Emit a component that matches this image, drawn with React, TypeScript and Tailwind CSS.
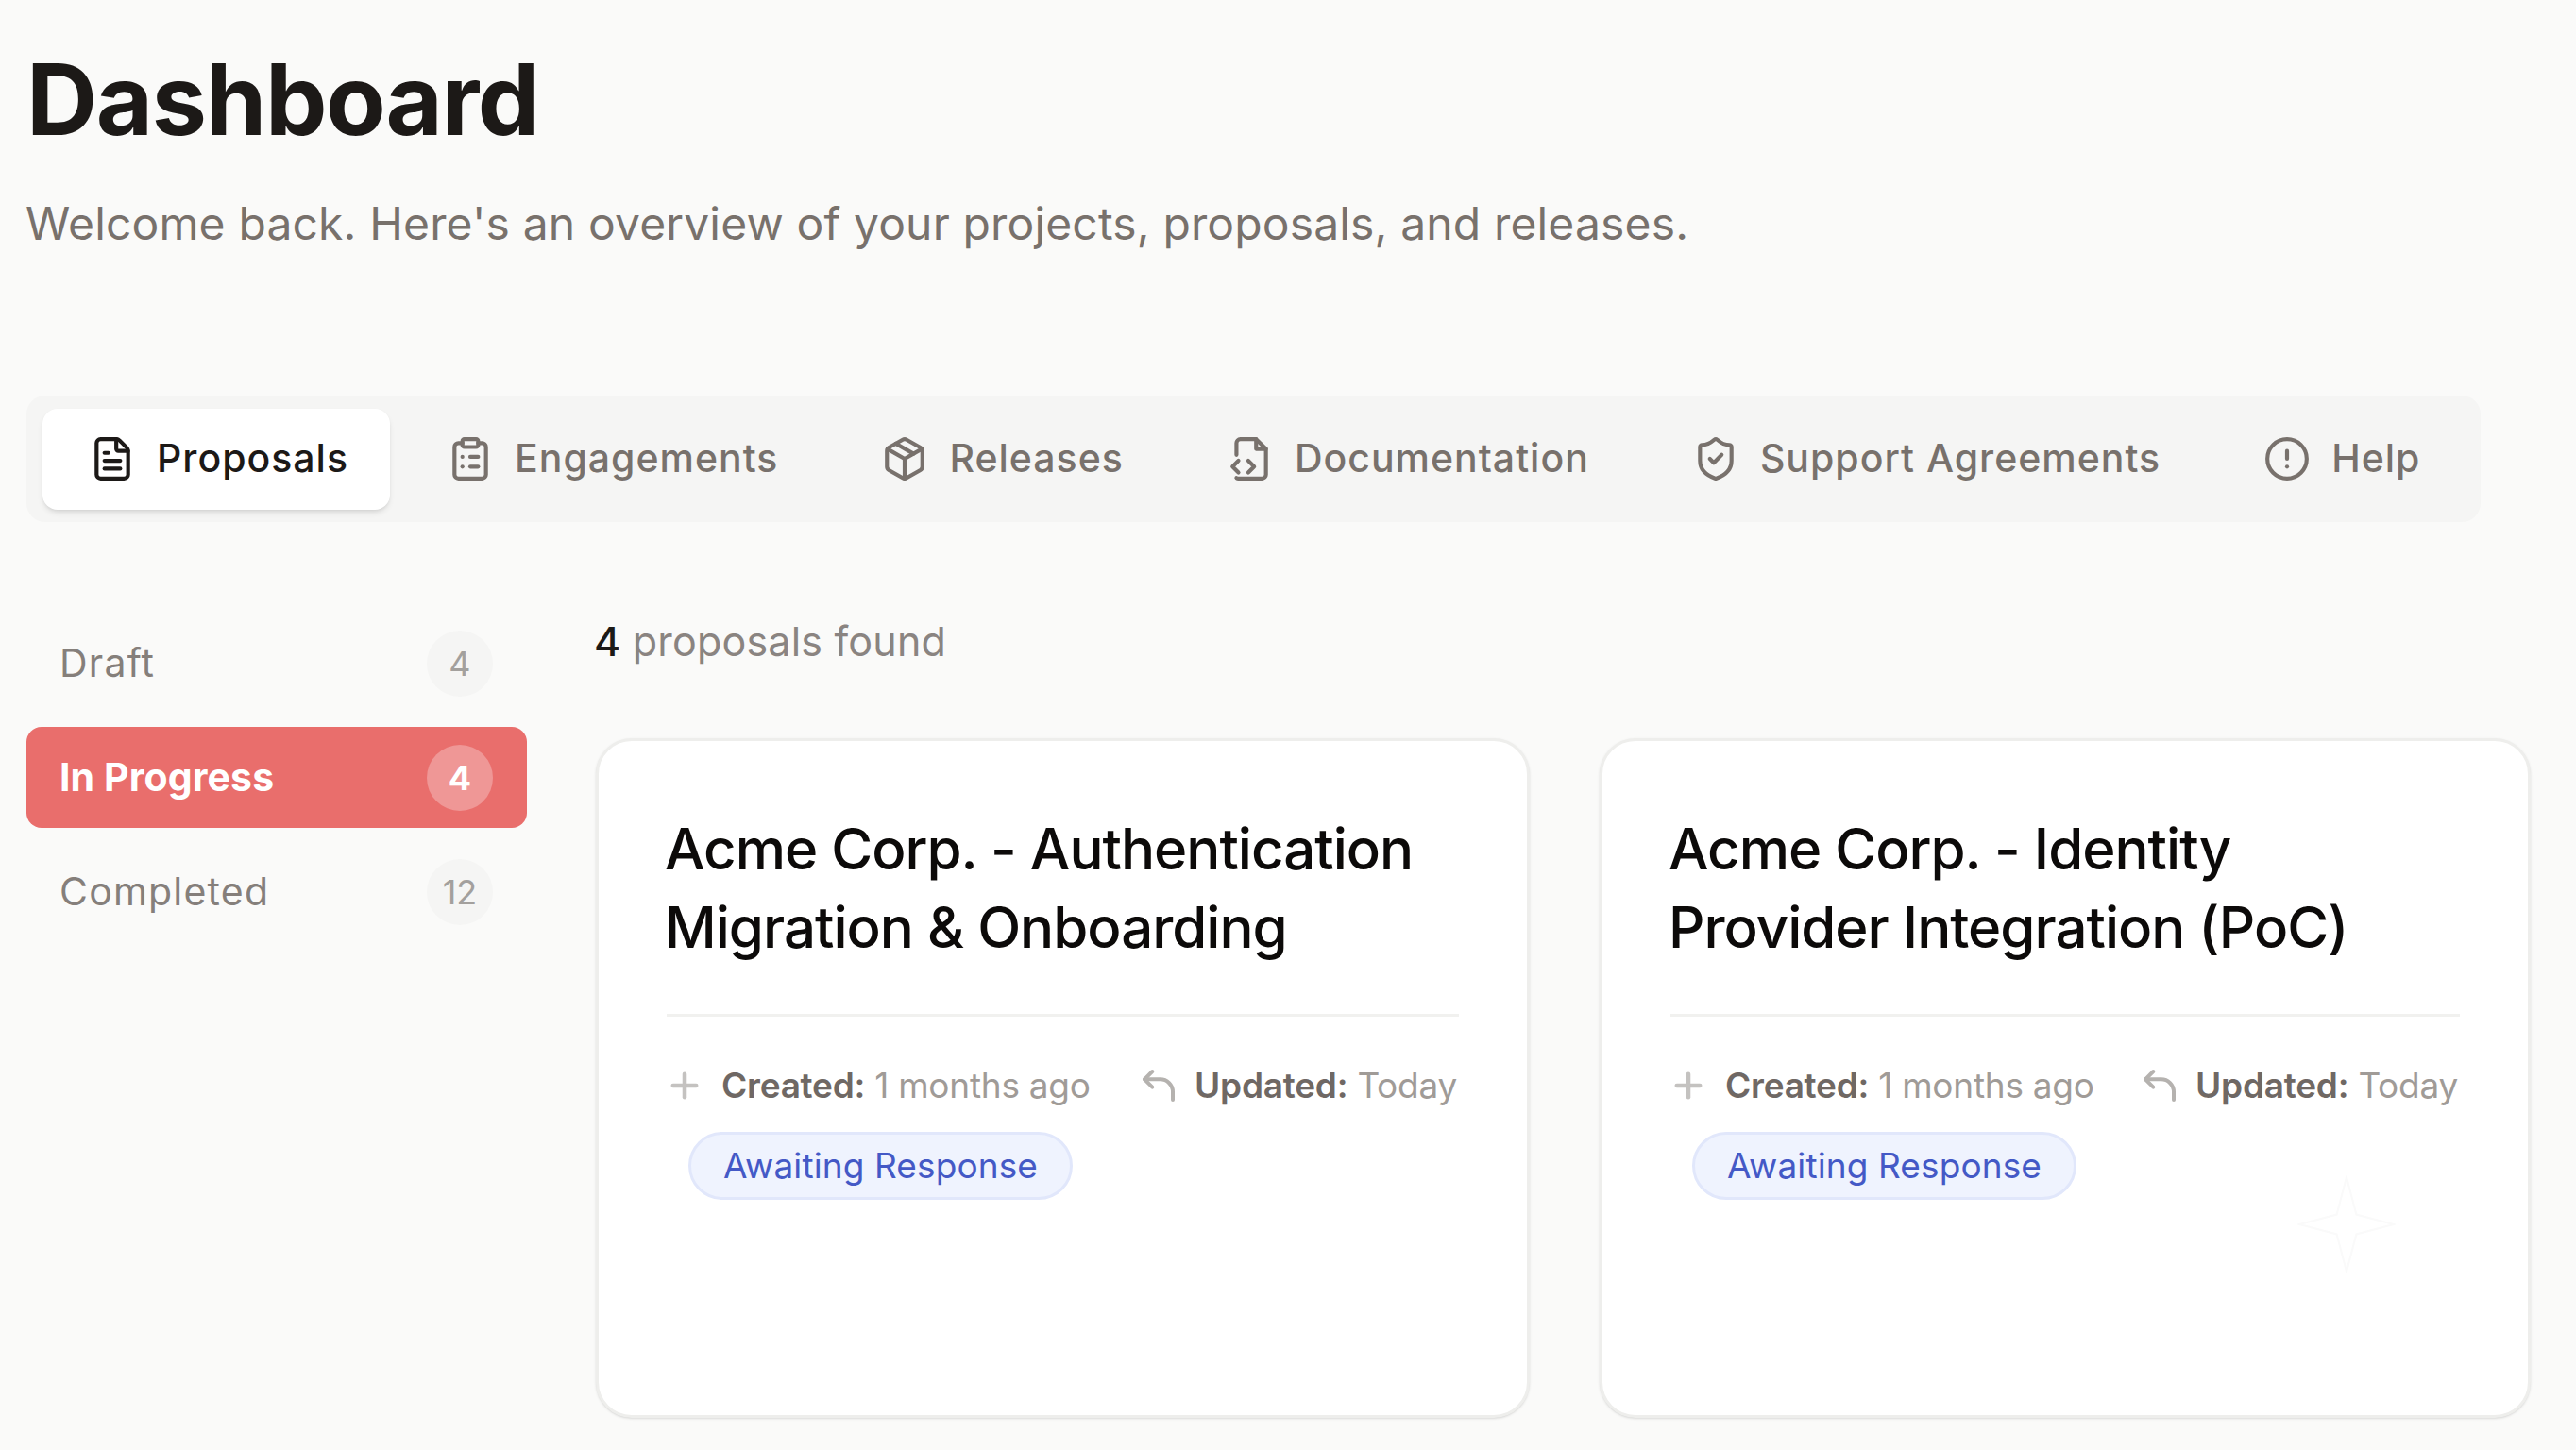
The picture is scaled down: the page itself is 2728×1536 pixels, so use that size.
import React from 'react';
import { FileText, ClipboardList, Package, ShieldCheck, CircleAlert, Plus } from 'lucide-react';

const FileCodeIcon = ({ className }: { className?: string }) => (
  <svg viewBox="0 0 24 24" fill="none" stroke="currentColor" strokeWidth="2" strokeLinecap="round" strokeLinejoin="round" className={className}>
    <path d="M5 10V4a2 2 0 0 1 2-2h8l5 5v13a2 2 0 0 1-2 2H6a2 2 0 0 1-1-.3" />
    <path d="M15 2v5h5" />
    <path d="m6 13-3 3 3 3" />
    <path d="m11 13 3 3-3 3" />
  </svg>
);

const UpdatedIcon = ({ className }: { className?: string }) => (
  <svg viewBox="0 0 24 24" fill="none" stroke="currentColor" strokeWidth="2.4" strokeLinecap="round" strokeLinejoin="round" className={className}>
    <path d="M8 3 3 8l5 5" />
    <path d="M3 8h10a8 8 0 0 1 8 8v5" />
  </svg>
);

const tabs = [
  { label: 'Engagements', Icon: ClipboardList },
  { label: 'Releases', Icon: Package },
  { label: 'Documentation', Icon: FileCodeIcon },
  { label: 'Support Agreements', Icon: ShieldCheck },
  { label: 'Help', Icon: CircleAlert },
];

const SideItem = ({ label, count, active }: { label: string; count: number; active?: boolean }) => (
  <div
    className={`h-[107px] rounded-[16px] pl-[35px] pr-[36px] flex items-center justify-between text-[41px] ${
      active ? 'bg-[#e96e6c] text-white font-bold tracking-[0.1px]' : 'text-[#857f7b] tracking-[1.2px]'
    }`}
  >
    <span>{label}</span>
    <span
      className={`min-w-[70px] h-[70px] rounded-full flex items-center justify-center text-[36px] tracking-normal ${
        active ? 'bg-[#ef9796] text-white' : 'bg-[#f5f5f4] text-[#a3a09d]'
      }`}
    >
      {count}
    </span>
  </div>
);

const ProposalCard = ({ lines, sparkle, className }: { lines: string[]; sparkle?: boolean; className: string }) => (
  <div className={`relative h-[720px] bg-white rounded-[38px] border-[3px] border-[#eeeeec] shadow-sm px-[70px] pt-[73px] ${className}`}>
    <h3 className="text-[60px] leading-[83px] font-medium text-[#0c0a09] tracking-[-1px]">
      {lines[0]}
      <br />
      {lines[1]}
    </h3>
    <div className="mt-[50px] h-[3px] bg-[#f1f1ef] mx-[2px]" />
    <div className="mt-[51px] pr-[4px] flex items-center justify-between text-[37px] leading-[44px] text-[#a09b97] tracking-[-0.25px]">
      <span className="flex items-center gap-[18px]">
        <Plus className="w-[42px] h-[42px] text-[#c4c2c0]" strokeWidth={2.6} />
        <span><span className="font-semibold text-[#6f6864]">Created:</span> 1 months ago</span>
      </span>
      <span className="flex items-center gap-[18px]">
        <UpdatedIcon className="w-[40px] h-[40px] text-[#b5b2af]" />
        <span><span className="font-semibold text-[#6f6864]">Updated:</span> Today</span>
      </span>
    </div>
    <div className="mt-[27px] ml-[25px] inline-flex items-center h-[72px] px-[34px] rounded-full bg-[#eff3fe] border-[3px] border-[#e1e7fb] text-[37px] text-[#4459c6] tracking-[0.1px]">
      Awaiting Response
    </div>
    {sparkle && (
      <svg viewBox="0 0 100 100" fill="none" stroke="#fafafa" strokeWidth="2" className="absolute right-[140px] top-[460px] w-[104px] h-[104px]">
        <path d="M50 2 60 40 98 50 60 60 50 98 40 60 2 50 40 40Z" />
      </svg>
    )}
  </div>
);

export default function App() {
  return (
    <div
      className="w-[2728px] h-[1536px] overflow-hidden bg-[#fafaf9] pl-[28px] pr-[48px] pt-[40px]"
      style={{ fontFamily: 'Inter, "Liberation Sans", sans-serif' }}
    >
      <h1 className="text-[104px] leading-[130px] font-bold text-[#1c1917] tracking-[-1.4px]">Dashboard</h1>
      <p className="mt-[37px] -ml-[1px] text-[48px] leading-[60px] text-[#78716c] tracking-[0.15px]">
        Welcome back. Here's an overview of your projects, proposals, and releases.
      </p>

      <div className="mt-[152px] w-[2599px] h-[134px] rounded-[20px] bg-[#f5f5f4] pl-[17px] flex items-center gap-[11px] whitespace-nowrap">
        <div className="h-[107px] bg-white rounded-[16px] shadow-md pl-[49px] pr-[44px] flex items-center gap-[22px] text-[41px] font-medium tracking-[1px] text-[#1c1917]">
          <FileText className="w-[50px] h-[50px]" strokeWidth={2} />
          Proposals
        </div>
        {tabs.map(({ label, Icon }) => (
          <div key={label} className="h-[107px] px-[49px] flex items-center gap-[22px] text-[41px] font-medium tracking-[1px] text-[#78716c]">
            <Icon className="w-[50px] h-[50px]" strokeWidth={2} />
            {label}
          </div>
        ))}
      </div>

      <div className="mt-[96px] flex gap-[73px]">
        <div className="w-[530px] shrink-0 flex flex-col gap-[14px]">
          <SideItem label="Draft" count={4} />
          <SideItem label="In Progress" count={4} active />
          <SideItem label="Completed" count={12} />
        </div>
        <div className="flex-1 pt-[3px]">
          <p className="h-[54px] -ml-[2px] leading-[54px] text-[43px] text-[#8a8481] tracking-[0.2px]">
            <span className="font-medium text-[#1c1917]">4</span> proposals found
          </p>
          <div className="mt-[76px] flex gap-[74px]">
            <ProposalCard className="w-[989px] shrink-0" lines={['Acme Corp. - Authentication', 'Migration & Onboarding']} />
            <ProposalCard className="flex-1" lines={['Acme Corp. - Identity', 'Provider Integration (PoC)']} sparkle />
          </div>
        </div>
      </div>
    </div>
  );
}
